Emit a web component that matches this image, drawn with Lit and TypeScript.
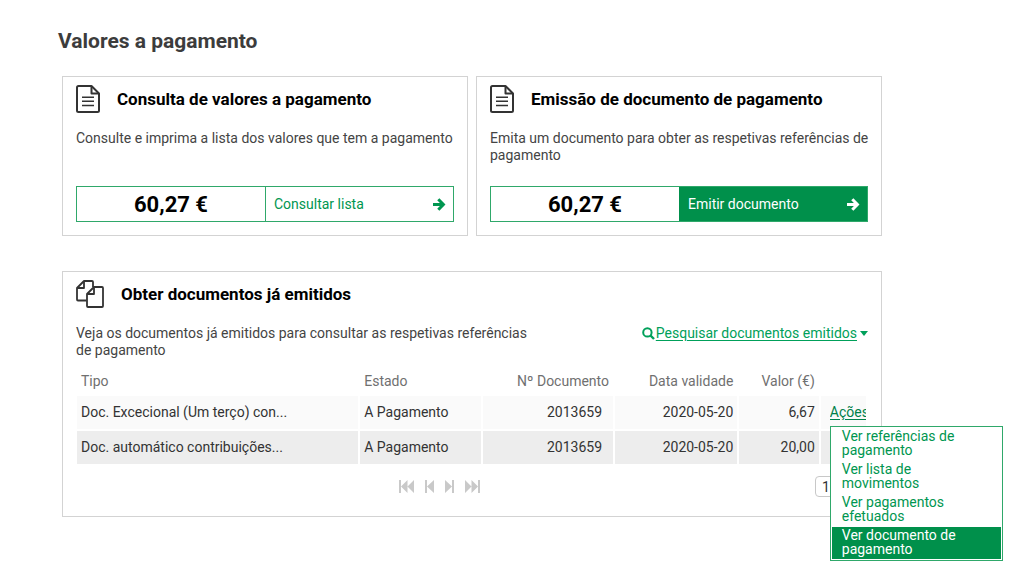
import { LitElement, html, css, svg } from "lit";
import { customElement, property, state } from "lit/decorators.js";
import { classMap } from "lit/directives/class-map.js";

const fileIcon = html`<svg class="icon" width="25" height="28" viewBox="0 0 25 28" fill="none" stroke="currentColor" stroke-width="2" stroke-linejoin="round" aria-hidden="true">
  <path d="M2.5 1H15.5L23 8.5V25.5Q23 27 21.5 27H2.5Q1 27 1 25.5V2.5Q1 1 2.5 1Z" />
  <path d="M15.5 1.5V8.5H22.5" />
  <path d="M6 12.3H18M6 16.3H18M6 20.5H18" stroke-width="1.6" />
</svg>`;

const copyIcon = html`<svg class="icon" width="28" height="28" viewBox="0 0 28 28" fill="none" stroke="currentColor" stroke-width="1.8" stroke-linejoin="round" aria-hidden="true">
  <path d="M10.5 20.5H2Q1 20.5 1 19.5V8L8 1H16Q17 1 17 2V7" />
  <path d="M8 1.5V8H1.5" />
  <path d="M11 14L18 7H26Q27 7 27 8V26Q27 27 26 27H12Q11 27 11 26Z" />
  <path d="M18 7.5V14H11.5" />
</svg>`;

const arrowIcon = html`<svg width="14" height="14" viewBox="0 0 14 14" fill="none" stroke="currentColor" stroke-width="3" aria-hidden="true">
  <path d="M1 7.5H11M6.3 2.2L11.4 7.5L6.3 12.8" />
</svg>`;

const searchIcon = html`<svg width="13" height="13" viewBox="0 0 13 13" fill="none" stroke="currentColor" stroke-width="2" aria-hidden="true">
  <circle cx="5.4" cy="5.4" r="4.2" /><path d="M8.5 8.5L12 12" stroke-width="2.4" />
</svg>`;

@customElement("action-card")
export class ActionCard extends LitElement {
  @property() heading = "";
  @property() text = "";
  @property() amount = "";
  @property() action = "";
  @property({ type: Boolean }) primary = false;

  static styles = css`
    :host { display: flex; flex-direction: column; border: 1px solid #d3d3d3; padding: 7px 13px 13px; box-sizing: border-box; }
    .head { display: flex; align-items: center; gap: 16px; height: 30px; }
    .icon { color: #333; flex: none; }
    h2 { margin: 0; font-size: 17px; line-height: 20px; font-weight: 700; color: #000; }
    p { margin: 16px -10px 20px 0; font-size: 14px; line-height: 17px; min-height: 36px; color: #444; }
    .bar { display: grid; grid-template-columns: 1fr 1fr; height: 36px; box-sizing: border-box; border: 1px solid #2fa86a; margin-top: auto; }
    .amount { display: flex; align-items: center; justify-content: center; font-size: 22px; font-weight: 700; color: #000; }
    button { display: flex; align-items: center; justify-content: space-between; border: 0; border-left: 1px solid #2fa86a; background: #fff; color: #009650; font: 14px/16px Roboto, sans-serif; padding: 0 7px 0 8px; cursor: pointer; }
    .primary { background: #00904b; border-color: #00904b; color: #fff; }
  `;

  render() {
    return html`
      <div class="head">${fileIcon}<h2>${this.heading}</h2></div>
      <p>${this.text}</p>
      <div class="bar">
        <div class="amount">${this.amount}</div>
        <button type="button" class=${classMap({ primary: this.primary })}>${this.action}${arrowIcon}</button>
      </div>
    `;
  }
}

interface Doc { tipo: string; estado: string; numero: string; data: string; valor: string; }

const docs: Doc[] = [
  { tipo: "Doc. Excecional (Um terço) con...", estado: "A Pagamento", numero: "2013659", data: "2020-05-20", valor: "6,67" },
  { tipo: "Doc. automático contribuições...", estado: "A Pagamento", numero: "2013659", data: "2020-05-20", valor: "20,00" },
];

const menuItems = ["Ver referências de pagamento", "Ver lista de movimentos", "Ver pagamentos efetuados", "Ver documento de pagamento"];

const pager = [
  { label: "Primeira página", width: 15, shape: svg`<path d="M0 0H2V13H0ZM8.5 0V13L2 6.5ZM15 0V13L8.5 6.5Z" />` },
  { label: "Página anterior", width: 9, shape: svg`<path d="M0 0H2V13H0ZM9 0V13L2 6.5Z" />` },
  { label: "Página seguinte", width: 9, shape: svg`<path d="M7 0H9V13H7ZM0 0V13L7 6.5Z" />` },
  { label: "Última página", width: 15, shape: svg`<path d="M13 0H15V13H13ZM6.5 0V13L13 6.5ZM0 0V13L6.5 6.5Z" />` },
];

@customElement("app-root")
export class AppRoot extends LitElement {
  @state() private openRow = 0;
  @state() private active = 3;

  static styles = css`
    :host { display: block; box-sizing: border-box; min-height: 100vh; padding: 28px 142px 8px 62px; font-family: Roboto, sans-serif; font-size: 14px; color: #3a3a3a; background: #fff; }
    h1 { margin: 0 0 22px -4px; font-size: 21px; line-height: 26px; font-weight: 700; color: #3c3c3c; }
    .cards { display: grid; grid-template-columns: 1fr 1fr; gap: 8px; }
    .issued { margin-top: 35px; border: 1px solid #d3d3d3; padding: 7px 13px 19px; }
    .head { display: flex; align-items: center; gap: 17px; height: 30px; }
    .icon { color: #333; flex: none; }
    h2 { margin: 0; font-size: 17px; line-height: 20px; font-weight: 700; color: #000; }
    .intro { display: flex; justify-content: space-between; align-items: flex-start; margin: 16px 0 7px; line-height: 17px; }
    .intro p { margin: 0; flex: 0 1 460px; color: #444; }
    .search { display: flex; align-items: center; gap: 1px; color: #00a05a; text-decoration: none; white-space: nowrap; }
    .search span { text-decoration: underline; text-underline-offset: 2px; }
    .caret { border: 4px solid transparent; border-top: 5px solid currentColor; border-bottom: 0; margin-left: 2px; }
    table { width: calc(100% + 1px); margin: 0 -1px; table-layout: fixed; border-spacing: 2px; }
    th, td { padding: 0 4px; font-weight: 400; text-align: left; line-height: 16px; white-space: nowrap; }
    th { height: 26px; color: #707070; }
    td { height: 31px; padding-bottom: 2px; background: #fafafa; color: #333; }
    tr:nth-child(even) td { background: #ededed; }
    .num { text-align: right; }
    td.doc { padding-right: 11px; }
    td.actions { position: relative; padding: 0 0 2px 9px; }
    .clip { overflow: hidden; }
    .link { border: 0; background: none; padding: 0; font: 14px/18px Roboto, sans-serif; color: #00804a; text-decoration: underline; text-underline-offset: 2px; display: block; cursor: pointer; }
    .menu { position: absolute; z-index: 1; top: 30px; left: 9px; width: 173px; box-sizing: border-box; margin: 0; padding: 1px; list-style: none; border: 1px solid #2fa86a; background: #fff; white-space: normal; display: grid; gap: 1px; }
    .menu a { display: block; padding: 1px 30px 3px 10px; line-height: 14px; color: #009650; text-decoration: none; }
    .menu a.active { background: #00904b; color: #fff; }
    .foot { display: grid; grid-template-columns: 5fr auto 6fr; align-items: center; margin-top: 10px; }
    .pages { grid-column: 2; display: flex; gap: 11px; }
    .pages button { display: block; border: 0; padding: 0; background: none; color: #c9c9c9; cursor: pointer; }
    .pages svg { display: block; fill: currentColor; }
    select { justify-self: end; width: 53px; height: 21px; border: 1px solid #c8c8c8; border-radius: 4px; background: #fff; color: #333; font: 14px/16px Roboto, sans-serif; padding: 0 6px; appearance: none; }
  `;

  private toggle(row: number) {
    this.openRow = this.openRow === row ? -1 : row;
  }

  private menu() {
    return html`<ul class="menu">
      ${menuItems.map((item, i) => html`<li><a href="#" class=${classMap({ active: i === this.active })} @mouseenter=${() => (this.active = i)}>${item}</a></li>`)}
    </ul>`;
  }

  render() {
    return html`
      <main>
        <h1>Valores a pagamento</h1>
        <div class="cards">
          <action-card heading="Consulta de valores a pagamento" text="Consulte e imprima a lista dos valores que tem a pagamento" amount="60,27 €" action="Consultar lista"></action-card>
          <action-card primary heading="Emissão de documento de pagamento" text="Emita um documento para obter as respetivas referências de pagamento" amount="60,27 €" action="Emitir documento"></action-card>
        </div>
        <section class="issued">
          <div class="head">${copyIcon}<h2>Obter documentos já emitidos</h2></div>
          <div class="intro">
            <p>Veja os documentos já emitidos para consultar as respetivas referências de pagamento</p>
            <a class="search" href="#">${searchIcon}<span>Pesquisar documentos emitidos</span><i class="caret"></i></a>
          </div>
          <table>
            <colgroup>
              <col style="width:36.1%" /><col style="width:15.5%" /><col style="width:16.7%" /><col style="width:15.7%" /><col style="width:10.2%" /><col />
            </colgroup>
            <thead>
              <tr><th>Tipo</th><th>Estado</th><th class="num">Nº Documento</th><th class="num">Data validade</th><th class="num">Valor (€)</th><th></th></tr>
            </thead>
            <tbody>
              ${docs.map((d, i) => html`<tr>
                <td>${d.tipo}</td><td>${d.estado}</td><td class="num doc">${d.numero}</td><td class="num">${d.data}</td><td class="num">${d.valor}</td>
                <td class="actions">${i === 0 ? html`<div class="clip"><button type="button" class="link" @click=${() => this.toggle(i)}>Ações</button></div>` : ""}${this.openRow === i ? this.menu() : ""}</td>
              </tr>`)}
            </tbody>
          </table>
          <div class="foot">
            <div class="pages">
              ${pager.map((p) => html`<button type="button" aria-label=${p.label}><svg width=${p.width} height="13" viewBox="0 0 ${p.width} 13">${p.shape}</svg></button>`)}
            </div>
            <select aria-label="Registos por página"><option>10</option><option>20</option></select>
          </div>
        </section>
      </main>
    `;
  }
}
